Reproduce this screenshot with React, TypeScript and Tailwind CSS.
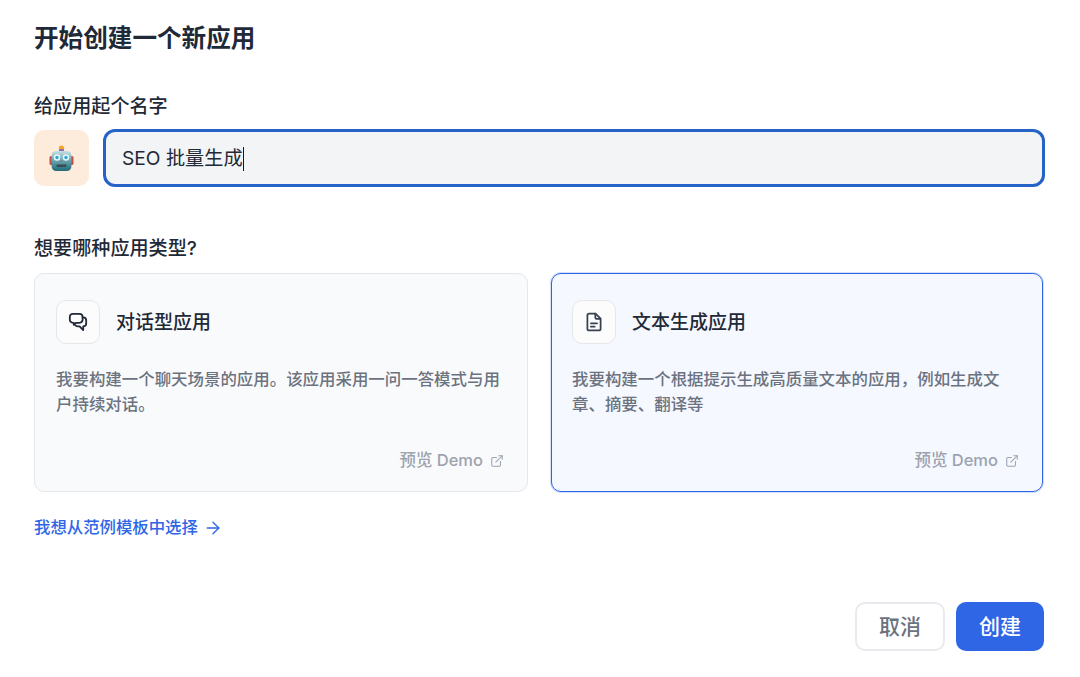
import React from 'react';
import { ArrowRight, ExternalLink } from 'lucide-react';

const RobotIcon = () => (
  <svg width="25" height="27" viewBox="0 0 25 27">
    <circle cx="12.5" cy="3.2" r="2.6" fill="#f5a623" />
    <rect x="10" y="4" width="5" height="2.6" rx="1" fill="#8e6bb0" />
    <rect x="0.5" y="11" width="3.6" height="9" rx="1.6" fill="#c0504d" />
    <rect x="20.9" y="11" width="3.6" height="9" rx="1.6" fill="#c0504d" />
    <rect x="2.6" y="6" width="19.8" height="20" rx="4.5" fill="url(#robotBody)" />
    <circle cx="8" cy="12.5" r="3.2" fill="#e8f6fa" />
    <circle cx="17" cy="12.5" r="3.2" fill="#e8f6fa" />
    <circle cx="8" cy="12.5" r="1.7" fill="#2ba8d8" />
    <circle cx="17" cy="12.5" r="1.7" fill="#2ba8d8" />
    <path d="M11.5 15.5h2l-1 2z" fill="#d9534f" />
    <rect x="7.5" y="19.5" width="10" height="2.6" rx="1" fill="#3a4a50" />
    <defs>
      <linearGradient id="robotBody" x1="0" y1="0" x2="0" y2="1">
        <stop offset="0" stopColor="#c4e0e4" />
        <stop offset="0.55" stopColor="#5f9ca6" />
        <stop offset="1" stopColor="#1f6a78" />
      </linearGradient>
    </defs>
  </svg>
);

const ChatIcon = () => (
  <svg width="20" height="20" viewBox="0 0 20 20" fill="none" stroke="#1f2937" strokeWidth="1.8" strokeLinejoin="round" strokeLinecap="round">
    <path d="M5 1.800h6.400c1.900 0 3.200 1.300 3.200 3.200v2.600c0 1.900-1.300 3.200-3.200 3.200H8.200l-2.400 2.100v-2.100H5c-1.900 0-3.200-1.300-3.200-3.200V5c0-1.900 1.300-3.200 3.200-3.200z" />
    <path d="M14.600 5.400h.6c1.800 0 3 1.200 3 3v3.200c0 1.700-1.200 2.800-3 2.800v3.700l-3.600-3.700H9.600c-1 0-1.800-.4-2.300-1.100" />
  </svg>
);

const DocIcon = () => (
  <svg width="22" height="22" viewBox="0 0 20 20" fill="none" stroke="#374151" strokeWidth="1.6" strokeLinejoin="round" strokeLinecap="round">
    <path d="M11.400 2.300H5.600c-.9 0-1.600.7-1.600 1.600v12.200c0 .9.7 1.600 1.600 1.600h8.800c.9 0 1.600-.7 1.600-1.600V7z" />
    <path d="M11.200 2.500v3.400c0 .7.500 1.200 1.200 1.200h3.400" />
    <path d="M7.200 11.200h5.600M7.200 14.300h3.400" />
  </svg>
);

interface TypeCardProps {
  icon: React.ReactNode;
  title: string;
  desc: string;
  active?: boolean;
}

const TypeCard: React.FC<TypeCardProps> = ({ icon, title, desc, active }) => (
  <div
    className={
      active
        ? 'flex h-[219px] flex-col rounded-[10px] border border-[#2f66e6] bg-[#f5f8ff] pt-[26px] pr-[23px] pb-[18px] pl-[20px] shadow-[0_0_0_1px_#d3e0fb]'
        : 'flex h-[219px] flex-col rounded-[10px] border border-[#e5e7eb] bg-[#f9fafb] pt-[26px] pr-[23px] pb-[18px] pl-[21px]'
    }
  >
    <div className="flex items-center gap-4">
      <div className="flex h-[44px] w-[44px] items-center justify-center rounded-[10px] border border-[#e5e7eb] bg-[#fcfcfd]">
        {icon}
      </div>
      <span className="pt-[2px] text-[19px] font-medium text-[#1f2937]">{title}</span>
    </div>
    <p className="mt-[22.500px] -mr-[2px] text-[16.450px] leading-[25px] font-medium text-[#6b7280]">{desc}</p>
    <div className="mt-auto flex items-center justify-end gap-[7px] text-[16.500px] leading-[25px] font-medium text-[#9ca3af]">
      <span>预览 Demo</span>
      <ExternalLink className="h-[14px] w-[14px]" strokeWidth={1.8} />
    </div>
  </div>
);

export default function App() {
  return (
    <div
      className="h-[677px] w-[1080px] overflow-hidden bg-white pt-[20px] pr-[35px] pl-[34px]"
      style={{ fontFamily: 'Inter, "Noto Sans CJK SC", sans-serif' }}
    >
      <h1 className="text-[24.600px] leading-[36px] font-semibold text-[#1f2937]">开始创建一个新应用</h1>

      <div className="mt-[36px] text-[19.100px] leading-[28px] font-medium text-[#1f2937]">给应用起个名字</div>
      <div className="mt-[9px] flex items-center gap-[15px]">
        <div className="flex h-[56px] w-[55px] shrink-0 items-center justify-center rounded-[10px] bg-[#fdebdc]">
          <RobotIcon />
        </div>
        <div className="-ml-[1px] flex h-[58px] flex-1 items-center rounded-[12px] border-[3px] border-[#2563c9] bg-[#f3f4f6] pt-[1px] pl-[16px] text-[19.200px] text-[#1f2937]">
          <span>SEO 批量生成</span>
          <span className="h-[24px] w-px bg-[#111827]" />
        </div>
      </div>

      <div className="mt-[47px] text-[19.100px] leading-[28px] font-medium text-[#1f2937]">想要哪种应用类型?</div>
      <div className="mt-[11px] grid grid-cols-[494px_492px] gap-[23px]">
        <TypeCard
          icon={<ChatIcon />}
          title="对话型应用"
          desc="我要构建一个聊天场景的应用。该应用采用一问一答模式与用户持续对话。"
        />
        <TypeCard
          active
          icon={<DocIcon />}
          title="文本生成应用"
          desc="我要构建一个根据提示生成高质量文本的应用，例如生成文章、摘要、翻译等"
        />
      </div>

      <div className="mt-[23px] flex items-center gap-[5px] text-[16.400px] leading-[25px] font-medium text-[#2f66e6]">
        <span>我想从范例模板中选择</span>
        <ArrowRight className="h-[20px] w-[20px]" strokeWidth={1.6} />
      </div>

      <div className="mt-[62px] -mr-[1px] flex justify-end gap-[11px] pr-[2px]">
        <button className="h-[49px] w-[90px] rounded-[10px] border-2 border-[#e8eaee] bg-white text-[21px] font-medium text-[#6b7280]">
          取消
        </button>
        <button className="h-[49px] w-[88px] rounded-[10px] bg-[#2f66e6] text-[21px] font-medium text-white">
          创建
        </button>
      </div>
    </div>
  );
}
